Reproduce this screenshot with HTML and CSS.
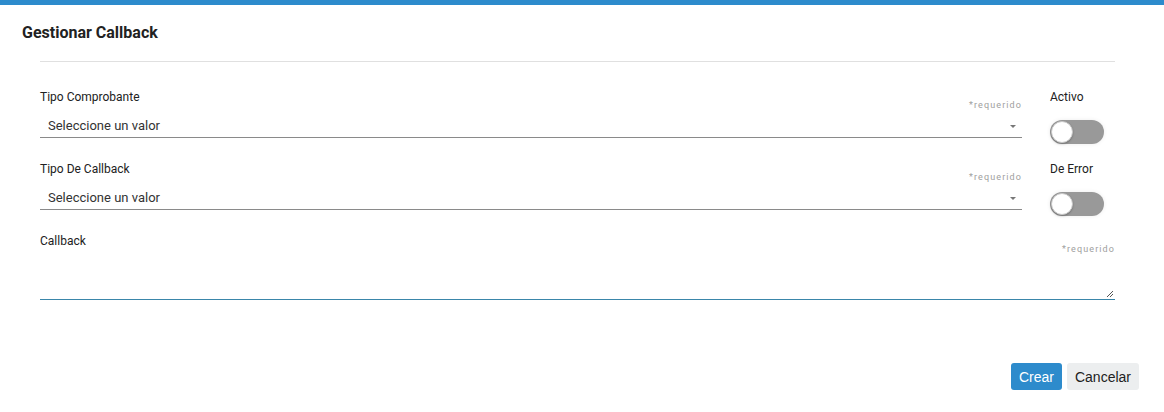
FILE: index.html
```html
<!DOCTYPE html>
<html lang="es">
<head>
<meta charset="utf-8">
<link rel="stylesheet" href="styles.css">
</head>
<body>
<div class="modal">
  <div class="modal-header">
    <h1 class="title">Gestionar Callback</h1>
  </div>
  <div class="modal-body">
    <hr class="divider">
    <div class="row">
      <div class="field">
        <label class="label">Tipo Comprobante</label>
        <div class="req">*requerido</div>
        <div class="select"><span>Seleccione un valor</span><span class="caret"></span></div>
      </div>
      <div class="toggle-field">
        <label class="label">Activo</label>
        <div class="switch"><span class="thumb"></span></div>
      </div>
    </div>
    <div class="row">
      <div class="field">
        <label class="label">Tipo De Callback</label>
        <div class="req">*requerido</div>
        <div class="select"><span>Seleccione un valor</span><span class="caret"></span></div>
      </div>
      <div class="toggle-field">
        <label class="label">De Error</label>
        <div class="switch"><span class="thumb"></span></div>
      </div>
    </div>
    <div class="field full">
      <label class="label">Callback</label>
      <div class="req">*requerido</div>
      <div class="textarea">
        <svg class="grip" width="8" height="8" viewBox="0 0 8 8"><path d="M7 1 L1 7 M7 4 L4 7" stroke="#555" stroke-width="1"/></svg>
      </div>
    </div>
  </div>
  <div class="modal-footer">
    <button class="btn btn-primary">Crear</button>
    <button class="btn btn-secondary">Cancelar</button>
  </div>
</div>
</body>
</html>
```
FILE: styles.css
```css
* { box-sizing: border-box; }
html, body { margin: 0; padding: 0; background: #fff; }
body { font-family: Roboto, "Noto Sans", Arial, sans-serif; color: #212121; width: 1164px; height: 412px; overflow: hidden; }
.modal { border-top: 5px solid #2d8bcc; height: 412px; display: flex; flex-direction: column; }
.modal-header { padding: 17px 22px 0; height: 40px; }
.title { margin: 0; font-size: 16px; font-weight: 700; line-height: 21px; color: #222; }
.modal-body { padding: 16px 49px 0 40px; flex: 1; }
.divider { border: 0; border-top: 1px solid #e0e0e0; margin: 0; }
.row { display: flex; gap: 28px; height: 72px; padding-top: 28px; }
.field { position: relative; flex: 1; }
.field.full { padding-top: 28px; }
.label { display: block; font-size: 12px; line-height: 14px; color: #212121; }
.req { position: absolute; right: 0; top: 9px; font-size: 9px; letter-spacing: 1.1px; color: #9e9e9e; line-height: 12px; }
.field.full .req { top: 37px; }
.select { margin-top: 11px; height: 23px; border-bottom: 1px solid #8a8a8a; display: flex; justify-content: space-between; align-items: center; padding: 0 4px 2px 8px; font-size: 13px; color: #333; }
.caret { width: 0; height: 0; border-left: 3.5px solid transparent; border-right: 3.5px solid transparent; border-top: 3.5px solid #777; margin-right: 2px; margin-top: 2px; }
.toggle-field { width: 65px; }
.switch { margin-top: 16px; width: 54px; height: 24px; border-radius: 12px; background: #999; position: relative; box-shadow: 0 0 4px rgba(0,0,0,0.08); }
.thumb { position: absolute; left: 1px; top: 1px; width: 22px; height: 22px; border-radius: 50%; background: #fff; border: 1px solid #c8c8c8; box-shadow: 0 1px 2px rgba(0,0,0,0.25); }
.textarea { margin-top: 18px; height: 34px; border-bottom: 1px solid #3a86aa; position: relative; }
.grip { position: absolute; right: 1px; bottom: 1px; }
.modal-footer { display: flex; justify-content: flex-end; gap: 5px; padding: 0 25px 22px 0; }
.btn { font-family: "Liberation Sans", Arial, sans-serif; font-size: 14px; height: 27px; border: 0; border-radius: 3px; padding: 0 8px; cursor: pointer; }
.btn-primary { background: #2d8bcc; color: #fff; }
.btn-secondary { background: #eceeef; color: #212121; }
```
